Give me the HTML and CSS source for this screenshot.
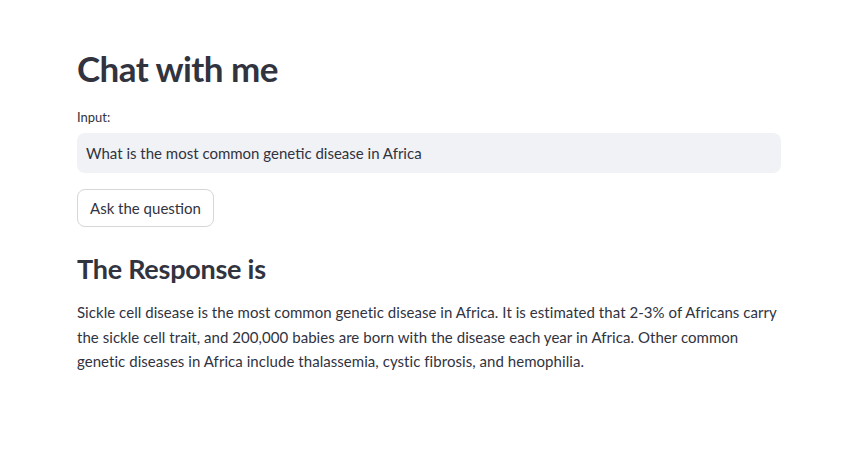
FILE: index.html
```html
<!DOCTYPE html>
<html lang="en">
<head>
<meta charset="utf-8">
<title>Chat with me</title>
<link rel="stylesheet" href="styles.css">
</head>
<body>
<main class="main">
  <h1 class="title">Chat with me</h1>
  <div class="field">
    <label class="label" for="q">Input:</label>
    <div class="input-box">
      <input id="q" class="input" type="text" value="What is the most common genetic disease in Africa">
    </div>
  </div>
  <div class="btn-row">
    <button class="btn" type="button">Ask the question</button>
  </div>
  <h2 class="subtitle">The Response is</h2>
  <p class="answer">Sickle cell disease is the most common genetic disease in Africa. It is estimated that 2-3% of Africans carry the sickle cell trait, and 200,000 babies are born with the disease each year in Africa. Other common genetic diseases in Africa include thalassemia, cystic fibrosis, and hemophilia.</p>
</main>
</body>
</html>
```

FILE: styles.css
```css
* { box-sizing: border-box; }
html, body {
  margin: 0;
  padding: 0;
  background: #ffffff;
}
body {
  font-family: "Lato", "Noto Sans", sans-serif;
  color: #31333f;
}
.main {
  width: 704px;
  margin: 0 0 0 77px;
  padding-top: 44px;
  display: flex;
  flex-direction: column;
}
.title {
  margin: 0;
  font-size: 35px;
  font-weight: 700;
  line-height: 48px;
  letter-spacing: -0.55px;
}
.field {
  margin-top: 16px;
  display: flex;
  flex-direction: column;
}
.label {
  font-size: 13px;
  line-height: 18px;
  height: 21px;
}
.input-box {
  margin-top: 4px;
  height: 40px;
  background: #f0f2f6;
  border-radius: 8px;
  display: flex;
  align-items: center;
  padding: 0 9px;
}
.input {
  width: 100%;
  border: none;
  background: transparent;
  outline: none;
  font-family: inherit;
  font-size: 15px;
  color: #31333f;
  padding: 0;
}
.btn-row {
  margin-top: 16px;
}
.btn {
  height: 38px;
  padding: 0 12px;
  background: #fff;
  border: 1px solid #d6d6d9;
  border-radius: 8px;
  font-family: inherit;
  font-size: 15px;
  color: #31333f;
}
.subtitle {
  margin: 24px 0 0;
  font-size: 27px;
  font-weight: 700;
  line-height: 36px;
  letter-spacing: -0.25px;
}
.answer {
  margin: 13px 0 0;
  font-size: 15px;
  line-height: 24.5px;
  letter-spacing: 0.05px;
}
```
